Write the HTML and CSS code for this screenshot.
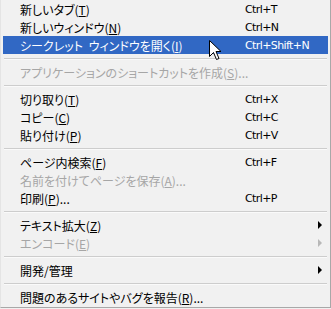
FILE: index.html
```html
<!DOCTYPE html>
<html lang="ja">
<head>
    <meta charset="UTF-8">
    <title>Menu</title>
    <link rel="stylesheet" href="styles.css">
</head>
<body>
    <div class="menu">
        <div class="item"><span class="label">新しいタブ(<u>T</u>)</span><span class="key">Ctrl+T</span></div>
        <div class="item"><span class="label">新しいウィンドウ(<u>N</u>)</span><span class="key">Ctrl+N</span></div>
        <div class="item active"><span class="label">シークレット ウィンドウを開く(<u>I</u>)</span><span class="key">Ctrl+Shift+N</span></div>
        <div class="sep"></div>
        <div class="item disabled"><span class="label">アプリケーションのショートカットを作成(<u>S</u>)...</span></div>
        <div class="sep"></div>
        <div class="item"><span class="label">切り取り(<u>T</u>)</span><span class="key">Ctrl+X</span></div>
        <div class="item"><span class="label">コピー(<u>C</u>)</span><span class="key">Ctrl+C</span></div>
        <div class="item"><span class="label">貼り付け(<u>P</u>)</span><span class="key">Ctrl+V</span></div>
        <div class="sep"></div>
        <div class="item"><span class="label">ページ内検索(<u>F</u>)</span><span class="key">Ctrl+F</span></div>
        <div class="item disabled"><span class="label">名前を付けてページを保存(<u>A</u>)...</span></div>
        <div class="item"><span class="label">印刷(<u>P</u>)...</span><span class="key">Ctrl+P</span></div>
        <div class="sep"></div>
        <div class="item"><span class="label">テキスト拡大(<u>Z</u>)</span><span class="arrow"></span></div>
        <div class="item disabled"><span class="label">エンコード(<u>E</u>)</span><span class="arrow"></span></div>
        <div class="sep"></div>
        <div class="item"><span class="label">開発/管理</span><span class="arrow"></span></div>
        <div class="sep"></div>
        <div class="item"><span class="label">問題のあるサイトやバグを報告(<u>R</u>)...</span></div>

        <svg class="cursor" width="13" height="21" viewBox="0 0 13 21">
            <path d="M0.5 0.5 L0.5 16.5 L4.5 12.5 L7.5 19.5 L10 18.5 L7 11.5 L12 11.5 Z" fill="#fff" stroke="#000" stroke-width="1"/>
        </svg>
    </div>
</body>
</html>
```

FILE: styles.css
```css
body {
    margin: 0;
    background-color: #f0f0f0;
}
.menu {
    position: relative;
    width: 331px;
    height: 308px;
    box-sizing: border-box;
    padding: 0 2px;
    background-color: #f1f1f1;
    border-left: 1px solid #e4e4e4;
    border-right: 1px solid #a8a8a8;
    border-bottom: 1px solid #a8a8a8;
    font-family: "Noto Sans CJK JP", "Liberation Sans", sans-serif;
    font-size: 12px;
    color: #000;
}
.item {
    display: flex;
    align-items: center;
    height: 18px;
    padding-left: 17px;
}
.item u {
    text-decoration: underline;
    text-underline-offset: 1px;
}
.label {
    width: 225px;
    white-space: nowrap;
    font-feature-settings: "palt";
    word-spacing: 3px;
}
.key {
    font-family: "DejaVu Sans", sans-serif;
    font-size: 11px;
    letter-spacing: -0.6px;
}
.active {
    background-color: #3168c4;
    color: #fff;
}
.disabled {
    color: #a6a6a6;
}
.arrow {
    margin-left: auto;
    margin-right: 6px;
    width: 0;
    height: 0;
    border-top: 4px solid transparent;
    border-bottom: 4px solid transparent;
    border-left: 4px solid #000;
}
.disabled .arrow {
    border-left-color: #b8b8b8;
}
.sep {
    height: 9px;
    margin: 0 1px;
    display: flex;
    align-items: center;
}
.sep::before {
    content: "";
    flex: 1;
    height: 1px;
    background-color: #cdcdcd;
    border-bottom: 1px solid #fafafa;
}
.cursor {
    position: absolute;
    left: 208px;
    top: 40px;
}
```
